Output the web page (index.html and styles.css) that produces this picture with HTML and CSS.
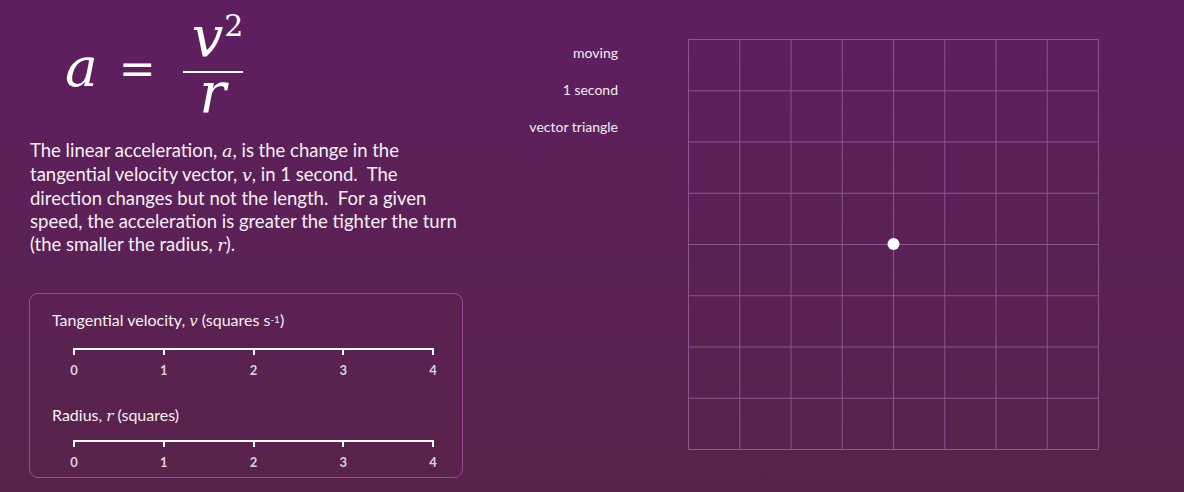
FILE: index.html
```html
<!DOCTYPE html>
<html>
<head>
<meta charset="utf-8">
<link rel="stylesheet" href="styles.css">
</head>
<body>
<main class="page">
  <section class="left">
    <div class="formula">
      <span class="m-a">a</span>
      <span class="m-eq">=</span>
      <span class="frac">
        <span class="num">v<sup>2</sup></span>
        <span class="den">r</span>
      </span>
    </div>
    <p class="desc">The linear acceleration, <i class="mv">a</i>, is the change in the<br>tangential velocity vector, <i class="mv">v</i>, in 1 second.&nbsp; The<br>direction changes but not the length.&nbsp; For a given<br>speed, the acceleration is greater the tighter the turn<br>(the smaller the radius, <i class="mv">r</i>).</p>
    <div class="panel">
      <div class="label">Tangential velocity, <i class="mv">v</i> (squares s<sup class="sup">-1</sup>)</div>
      <div class="slider">
        <div class="tick"><span>0</span></div>
        <div class="tick"><span>1</span></div>
        <div class="tick"><span>2</span></div>
        <div class="tick"><span>3</span></div>
        <div class="tick"><span>4</span></div>
      </div>
      <div class="label second">Radius, <i class="mv">r</i> (squares)</div>
      <div class="slider slider-second">
        <div class="tick"><span>0</span></div>
        <div class="tick"><span>1</span></div>
        <div class="tick"><span>2</span></div>
        <div class="tick"><span>3</span></div>
        <div class="tick"><span>4</span></div>
      </div>
    </div>
  </section>
  <nav class="toggles">
    <span class="toggle">moving</span>
    <span class="toggle">1 second</span>
    <span class="toggle">vector triangle</span>
  </nav>
  <div class="grid">
    <svg width="411" height="411" viewBox="0 0 411 411">
      <g stroke="#8d5590" stroke-width="1" fill="none">
        <path d="M0.5 0.5V410.5M51.75 0.5V410.5M103 0.5V410.5M154.25 0.5V410.5M205.5 0.5V410.5M256.75 0.5V410.5M308 0.5V410.5M359.25 0.5V410.5M410.5 0.5V410.5"/>
        <path d="M0.5 0.5H410.5M0.5 51.75H410.5M0.5 103H410.5M0.5 154.25H410.5M0.5 205.5H410.5M0.5 256.75H410.5M0.5 308H410.5M0.5 359.25H410.5M0.5 410.5H410.5"/>
      </g>
      <circle cx="205.5" cy="205" r="6" fill="#ffffff"/>
    </svg>
  </div>
</main>
</body>
</html>
```
FILE: styles.css
```css
html, body {
  margin: 0;
  padding: 0;
}
body {
  width: 1184px;
  height: 492px;
  overflow: hidden;
  background: linear-gradient(to bottom, #5e1f60 0%, #58234a 100%);
  color: #f6eff6;
  font-family: Lato, "Liberation Sans", sans-serif;
}
.page {
  display: flex;
  align-items: flex-start;
  padding: 0 0 0 29px;
}
.left {
  width: 434px;
  display: flex;
  flex-direction: column;
}
.formula {
  display: flex;
  align-items: flex-start;
  height: 112px;
  padding-left: 36px;
  box-sizing: border-box;
  font-family: "DejaVu Serif", "Liberation Serif", serif;
  color: #ffffff;
}
.m-a {
  font-style: italic;
  font-size: 55px;
  line-height: 54px;
  margin-top: 40px;
}
.m-eq {
  font-size: 44px;
  line-height: 44px;
  margin: 47px 27px 0 21px;
}
.frac {
  display: flex;
  flex-direction: column;
  align-items: center;
  width: 60px;
  margin-top: 11px;
}
.num {
  font-style: italic;
  font-size: 56px;
  line-height: 52px;
  padding: 0 0 8px 9px;
  border-bottom: 2px solid #ffffff;
  width: 100%;
  box-sizing: border-box;
  white-space: nowrap;
}
.num sup {
  font-style: normal;
  font-size: 30px;
  line-height: 28px;
  vertical-align: top;
  margin-left: 1px;
  position: relative;
  top: 1px;
}
.den {
  font-style: italic;
  font-size: 56px;
  line-height: 40px;
}
.desc {
  margin: 27px 0 0 1px;
  font-size: 18.5px;
  line-height: 23px;
  color: #f6eff6;
}
.mv {
  font-family: "DejaVu Serif", "Liberation Serif", serif;
  font-style: italic;
  font-size: 0.95em;
}
.panel {
  margin-top: 36px;
  height: 185px;
  box-sizing: border-box;
  border: 1px solid #9b4b93;
  border-radius: 9px;
  padding: 16px 0 0 22px;
}
.label {
  font-size: 16px;
  line-height: 20px;
  color: #f6eff6;
}
.label .mv {
  font-size: 15px;
}
.sup {
  font-size: 10px;
  vertical-align: top;
  position: relative;
  top: -1px;
}
.label.second {
  margin-top: 27px;
}
.slider {
  margin: 17px 0 0 21px;
  width: 361px;
  border-top: 2px solid #ffffff;
  display: flex;
  justify-content: space-between;
  height: 28px;
}
.slider.slider-second {
  margin-top: 14px;
}
.tick {
  width: 2px;
  display: flex;
  flex-direction: column;
  align-items: center;
}
.tick::before {
  content: "";
  width: 2px;
  height: 5px;
  background: #ffffff;
  flex: none;
}
.tick span {
  margin-top: 8px;
  font-size: 13px;
  line-height: 14px;
  color: #ddd0de;
  white-space: nowrap;
  font-weight: 700;
}
.toggles {
  width: 155px;
  display: flex;
  flex-direction: column;
  align-items: flex-end;
  gap: 20px;
  padding-top: 44px;
  font-size: 14px;
  line-height: 17px;
  color: #f3ecf3;
}
.grid {
  margin: 39px 0 0 70px;
  width: 411px;
  height: 411px;
}
.grid svg {
  display: block;
}
```
